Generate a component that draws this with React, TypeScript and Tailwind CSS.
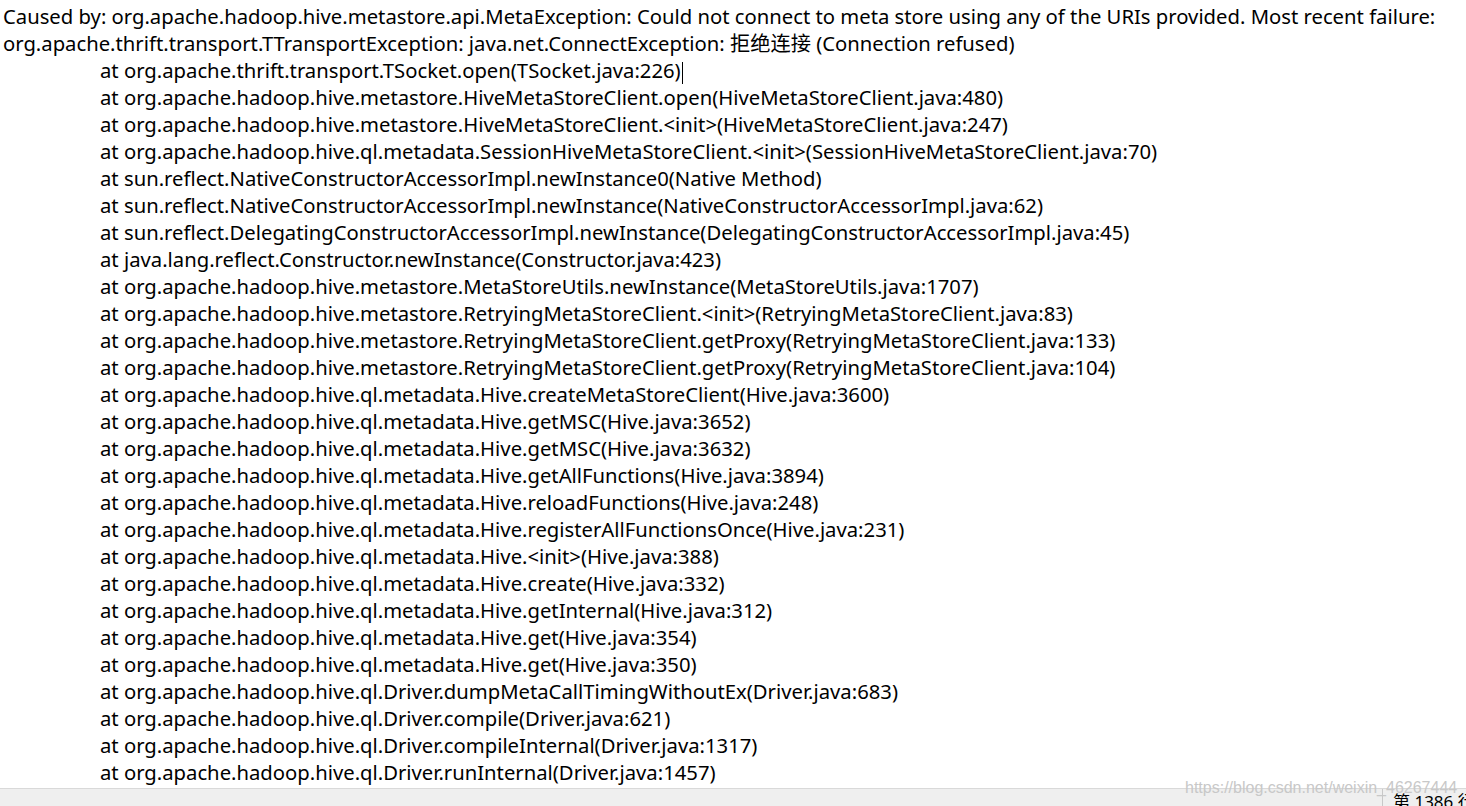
import React from "react";

const lines = [
  "at org.apache.thrift.transport.TSocket.open(TSocket.java:226)",
  "at org.apache.hadoop.hive.metastore.HiveMetaStoreClient.open(HiveMetaStoreClient.java:480)",
  "at org.apache.hadoop.hive.metastore.HiveMetaStoreClient.<init>(HiveMetaStoreClient.java:247)",
  "at org.apache.hadoop.hive.ql.metadata.SessionHiveMetaStoreClient.<init>(SessionHiveMetaStoreClient.java:70)",
  "at sun.reflect.NativeConstructorAccessorImpl.newInstance0(Native Method)",
  "at sun.reflect.NativeConstructorAccessorImpl.newInstance(NativeConstructorAccessorImpl.java:62)",
  "at sun.reflect.DelegatingConstructorAccessorImpl.newInstance(DelegatingConstructorAccessorImpl.java:45)",
  "at java.lang.reflect.Constructor.newInstance(Constructor.java:423)",
  "at org.apache.hadoop.hive.metastore.MetaStoreUtils.newInstance(MetaStoreUtils.java:1707)",
  "at org.apache.hadoop.hive.metastore.RetryingMetaStoreClient.<init>(RetryingMetaStoreClient.java:83)",
  "at org.apache.hadoop.hive.metastore.RetryingMetaStoreClient.getProxy(RetryingMetaStoreClient.java:133)",
  "at org.apache.hadoop.hive.metastore.RetryingMetaStoreClient.getProxy(RetryingMetaStoreClient.java:104)",
  "at org.apache.hadoop.hive.ql.metadata.Hive.createMetaStoreClient(Hive.java:3600)",
  "at org.apache.hadoop.hive.ql.metadata.Hive.getMSC(Hive.java:3652)",
  "at org.apache.hadoop.hive.ql.metadata.Hive.getMSC(Hive.java:3632)",
  "at org.apache.hadoop.hive.ql.metadata.Hive.getAllFunctions(Hive.java:3894)",
  "at org.apache.hadoop.hive.ql.metadata.Hive.reloadFunctions(Hive.java:248)",
  "at org.apache.hadoop.hive.ql.metadata.Hive.registerAllFunctionsOnce(Hive.java:231)",
  "at org.apache.hadoop.hive.ql.metadata.Hive.<init>(Hive.java:388)",
  "at org.apache.hadoop.hive.ql.metadata.Hive.create(Hive.java:332)",
  "at org.apache.hadoop.hive.ql.metadata.Hive.getInternal(Hive.java:312)",
  "at org.apache.hadoop.hive.ql.metadata.Hive.get(Hive.java:354)",
  "at org.apache.hadoop.hive.ql.metadata.Hive.get(Hive.java:350)",
  "at org.apache.hadoop.hive.ql.Driver.dumpMetaCallTimingWithoutEx(Driver.java:683)",
  "at org.apache.hadoop.hive.ql.Driver.compile(Driver.java:621)",
  "at org.apache.hadoop.hive.ql.Driver.compileInternal(Driver.java:1317)",
  "at org.apache.hadoop.hive.ql.Driver.runInternal(Driver.java:1457)",
];

export default function App() {
  return (
    <div
      className="relative w-[1466px] h-[806px] overflow-hidden bg-white text-black flex flex-col"
      style={{ fontFamily: '"Noto Sans", "Noto Sans CJK SC", sans-serif' }}
    >
      <div className="flex-1 pt-[3px] pl-[3px] text-[20.25px] leading-[27px] whitespace-pre">
        <div>
          Caused by: org.apache.hadoop.hive.metastore.api.MetaException: Could not connect to meta store using any of the URIs provided. Most recent failure:
        </div>
        <div>
          org.apache.thrift.transport.TTransportException: java.net.ConnectException: 拒绝连接 (Connection refused)
        </div>
        {lines.map((l, i) => (
          <div key={i} className="pl-[97px]">
            {l}
            {i === 0 && (
              <span className="inline-block w-[1px] h-[22px] bg-black align-middle ml-[1px]" />
            )}
          </div>
        ))}
      </div>
      <div className="h-[18px] shrink-0 bg-[#efefef] border-t border-[#d9d9d9] flex justify-end">
        <div className="border-l border-[#c8c8c8] w-[84px] pl-[10px] text-[17px] leading-[26px] text-black whitespace-nowrap">
          第 1386 行
        </div>
      </div>
      <div
        className="absolute left-[1185px] top-[776px] text-[16px] text-[#c8c8c8] whitespace-nowrap"
        style={{ fontFamily: '"Liberation Sans", Arial, sans-serif' }}
      >
        https://blog.csdn.net/weixin_46267444
      </div>
    </div>
  );
}
